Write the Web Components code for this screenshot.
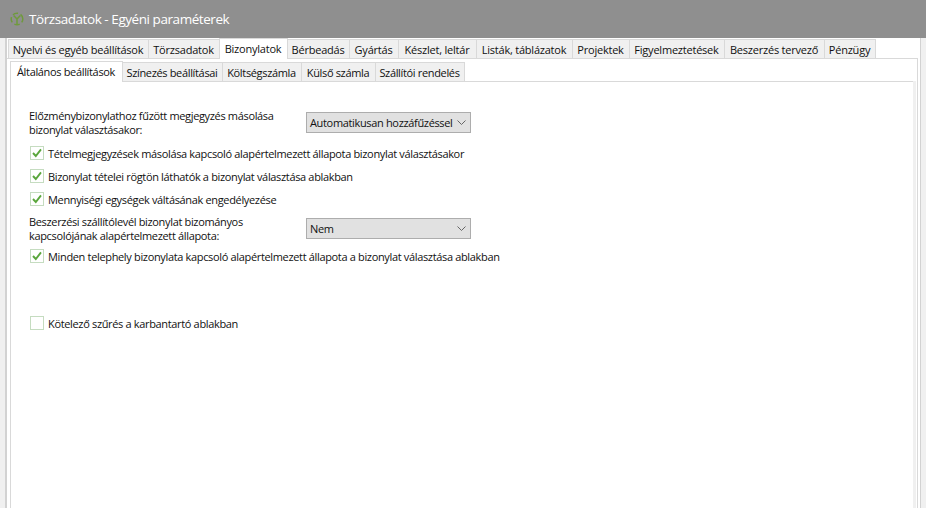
<!DOCTYPE html>
<html lang="hu">
<head>
<meta charset="utf-8">
<title>Törzsadatok</title>
<style>
html, body { margin: 0; height: 100%; overflow: hidden; background: #f0f0f0; }
body { font: 11px "Open Sans", "Noto Sans", sans-serif; letter-spacing: -.34px; color: #111; }
</style>
</head>
<body>
<app-window heading="Törzsadatok - Egyéni paraméterek">
  <tab-strip level="outer">
    <tab-item w="140">Nyelvi és egyéb beállítások</tab-item>
    <tab-item w="71">Törzsadatok</tab-item>
    <tab-item w="68" selected>Bizonylatok</tab-item>
    <tab-item w="62">Bérbeadás</tab-item>
    <tab-item w="49">Gyártás</tab-item>
    <tab-item w="78">Készlet, leltár</tab-item>
    <tab-item w="96">Listák, táblázatok</tab-item>
    <tab-item w="57">Projektek</tab-item>
    <tab-item w="95">Figyelmeztetések</tab-item>
    <tab-item w="100">Beszerzés tervező</tab-item>
    <tab-item w="51">Pénzügy</tab-item>
  </tab-strip>
  <tab-page>
    <tab-strip level="inner">
      <tab-item w="112" selected>Általános beállítások</tab-item>
      <tab-item w="100">Színezés beállításai</tab-item>
      <tab-item w="79">Költségszámla</tab-item>
      <tab-item w="74">Külső számla</tab-item>
      <tab-item w="89">Szállítói rendelés</tab-item>
    </tab-strip>
    <settings-panel>
      <combo-row value="Automatikusan hozzáfűzéssel" style="margin-top:30px">Előzménybizonylathoz fűzött megjegyzés másolása<br>bizonylat választásakor:</combo-row>
      <check-row checked style="margin-top:13px">Tételmegjegyzések másolása kapcsoló alapértelmezett állapota bizonylat választásakor</check-row>
      <check-row checked style="margin-top:9px">Bizonylat tételei rögtön láthatók a bizonylat választása ablakban</check-row>
      <check-row checked style="margin-top:9px">Mennyiségi egységek váltásának engedélyezése</check-row>
      <combo-row value="Nem" style="margin-top:12px">Beszerzési szállítólevél bizonylat bizományos<br>kapcsolójának alapértelmezett állapota:</combo-row>
      <check-row checked style="margin-top:10px">Minden telephely bizonylata kapcsoló alapértelmezett állapota a bizonylat választása ablakban</check-row>
      <check-row style="margin-top:53px">Kötelező szűrés a karbantartó ablakban</check-row>
    </settings-panel>
  </tab-page>
</app-window>

<script>
class AppWindow extends HTMLElement {
  constructor() {
    super();
    this.attachShadow({ mode: "open" }).innerHTML = `
<style>
:host { display: flex; flex-direction: column; height: 100vh; }
header { flex: none; height: 38px; background: #8f8f8f; color: #fff; display: flex; align-items: center; gap: 5px; padding-left: 10px; font-size: 13.5px; letter-spacing: -.44px; }
svg { flex: none; }
main { flex: 1; min-height: 0; display: flex; flex-direction: column; margin: 0 5px; background: #fff; border: solid #d2d2d2; border-width: 0 1px 0 2px; }
</style>
<header>
  <svg width="14" height="14" viewBox="0 0 14 14" fill="none" stroke="#6f9a3c" stroke-width="1.5">
    <circle cx="7" cy="7" r="5.8" stroke-dasharray="5.5 2.6" stroke-dashoffset="2"/>
    <path d="M3.6 3.4L7 7l3.4-3.6M7 7v5"/>
  </svg>
  <span id="t"></span>
</header>
<main><slot></slot></main>`;
    this.shadowRoot.getElementById("t").textContent = this.getAttribute("heading");
  }
}

class TabStrip extends HTMLElement {
  constructor() {
    super();
    this.attachShadow({ mode: "open" }).innerHTML = `
<style>
:host { display: flex; flex: none; height: 21px; align-items: flex-end; padding-left: 2px; position: relative; z-index: 1; margin-bottom: -1px; letter-spacing: -.22px; }
:host([level="inner"]) { padding-left: 1px; letter-spacing: -.34px; }
</style>
<slot></slot>`;
  }
}

class TabItem extends HTMLElement {
  constructor() {
    super();
    this.attachShadow({ mode: "open" }).innerHTML = `
<style>
:host { display: flex; flex: none; box-sizing: border-box; height: 19px; margin-bottom: 1px; padding-right: 1px; align-items: center; justify-content: center; background: #f0f0f0; border: 1px solid #d9d9d9; border-bottom: 0; margin-left: -1px; white-space: nowrap; }
:host([selected]) { height: 21px; margin-bottom: 0; background: #fff; position: relative; z-index: 2; padding-bottom: 2px; }
</style>
<slot></slot>`;
    this.style.width = (+this.getAttribute("w") + 1) + "px";
  }
}

class TabPage extends HTMLElement {
  constructor() {
    super();
    this.attachShadow({ mode: "open" }).innerHTML = `
<style>
:host { display: flex; flex-direction: column; flex: 1; min-height: 0; box-sizing: border-box; background: #fff; border: solid #d9d9d9; border-width: 1px 1px 0 0; padding: 2px 1px 0 3px; margin-right: 2px; }
</style>
<slot></slot>`;
  }
}

class SettingsPanel extends HTMLElement {
  constructor() {
    super();
    this.attachShadow({ mode: "open" }).innerHTML = `
<style>
:host { display: flex; flex-direction: column; flex: 1; min-height: 0; box-sizing: border-box; background: #fff; border: solid #d9d9d9; border-width: 1px 0 0 1px; box-shadow: 3px 0 0 #f0f0f0; padding-left: 18px; margin-right: 3px; }
</style>
<slot></slot>`;
  }
}

class ComboRow extends HTMLElement {
  constructor() {
    super();
    this.attachShadow({ mode: "open" }).innerHTML = `
<style>
:host { display: flex; align-items: center; height: 21px; }
.label { width: 277px; flex: none; line-height: 14px; }
.combo { box-sizing: border-box; width: 165px; height: 21px; flex: none; display: flex; align-items: center; justify-content: space-between; background: #e1e1e1; border: 1px solid #adadad; padding: 0 4px 0 3px; white-space: nowrap; }
svg { flex: none; }
</style>
<div class="label"><slot></slot></div>
<div class="combo"><span id="v"></span>
  <svg width="9" height="5" viewBox="0 0 9 5" fill="none" stroke="#666" stroke-width="1"><path d="M.5 .5L4.5 4.5 8.5 .5"/></svg>
</div>`;
    this.shadowRoot.getElementById("v").textContent = this.getAttribute("value");
  }
}

class CheckRow extends HTMLElement {
  constructor() {
    super();
    this.attachShadow({ mode: "open" }).innerHTML = `
<style>
:host { display: flex; align-items: center; gap: 4px; height: 14px; padding-left: 1px; white-space: nowrap; }
.box { box-sizing: border-box; width: 14px; height: 14px; flex: none; border: 1px solid #c5dcc0; background: #fff; display: flex; }
</style>
<div class="box" id="b"></div>
<span><slot></slot></span>`;
    if (this.hasAttribute("checked")) {
      this.shadowRoot.getElementById("b").innerHTML =
        `<svg width="12" height="12" viewBox="0 0 12 12" fill="none" stroke="#5aa63c" stroke-width="1.9"><path d="M2 6l2.8 3L10 2.4"/></svg>`;
    }
  }
}

customElements.define("app-window", AppWindow);
customElements.define("tab-strip", TabStrip);
customElements.define("tab-item", TabItem);
customElements.define("tab-page", TabPage);
customElements.define("settings-panel", SettingsPanel);
customElements.define("combo-row", ComboRow);
customElements.define("check-row", CheckRow);
</script>
</body>
</html>
